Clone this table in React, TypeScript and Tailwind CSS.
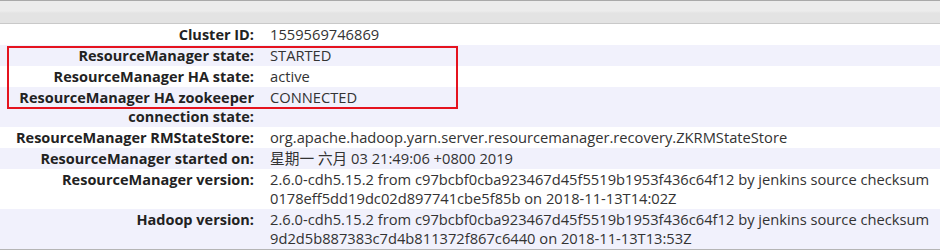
import React from 'react'

const rows: { label: React.ReactNode; value: React.ReactNode }[] = [
  { label: 'Cluster ID:', value: '1559569746869' },
  { label: 'ResourceManager state:', value: 'STARTED' },
  { label: 'ResourceManager HA state:', value: 'active' },
  {
    label: (
      <>
        ResourceManager HA zookeeper
        <br />
        connection state:
      </>
    ),
    value: 'CONNECTED',
  },
  {
    label: 'ResourceManager RMStateStore:',
    value: 'org.apache.hadoop.yarn.server.resourcemanager.recovery.ZKRMStateStore',
  },
  { label: 'ResourceManager started on:', value: '星期一 六月 03 21:49:06 +0800 2019' },
  {
    label: 'ResourceManager version:',
    value: (
      <>
        2.6.0-cdh5.15.2 from c97bcbf0cba923467d45f5519b1953f436c64f12 by jenkins source checksum
        <br />
        0178eff5dd19dc02d897741cbe5f85b on 2018-11-13T14:02Z
      </>
    ),
  },
  {
    label: 'Hadoop version:',
    value: (
      <>
        2.6.0-cdh5.15.2 from c97bcbf0cba923467d45f5519b1953f436c64f12 by jenkins source checksum
        <br />
        9d2d5b887383c7d4b811372f867c6440 on 2018-11-13T13:53Z
      </>
    ),
  },
]

export default function App() {
  return (
    <div className="relative w-[940px] h-[250px] overflow-hidden bg-white font-['Open_Sans','Noto_Sans_CJK_SC',sans-serif] leading-[19px]">
      {/* top header strip */}
      <div className="h-[24px] border-t border-[#a9a9a9] border-b border-b-[#c9c9c9] bg-[linear-gradient(#ececec_0%,#ececec_45%,#e3e3e3_55%,#e3e3e3_100%)]" />

      <div className="border-b border-[#b5b5b5]">
        {rows.map((r, i) => (
          <div
            key={i}
            className={`grid grid-cols-[262px_1fr] py-px ${i % 2 === 1 ? 'bg-[#f1f1fc]' : 'bg-white'}`}
          >
            <div className="pr-2 text-right font-bold text-[14.5px] text-[#222] whitespace-nowrap">{r.label}</div>
            <div className="pl-2 text-[14.7px] text-[#333] whitespace-nowrap">{r.value}</div>
          </div>
        ))}
      </div>

      {/* red annotation box */}
      <div className="absolute left-[7px] top-[46px] w-[451px] h-[63px] border-2 border-[#e5131f]" />
    </div>
  )
}
